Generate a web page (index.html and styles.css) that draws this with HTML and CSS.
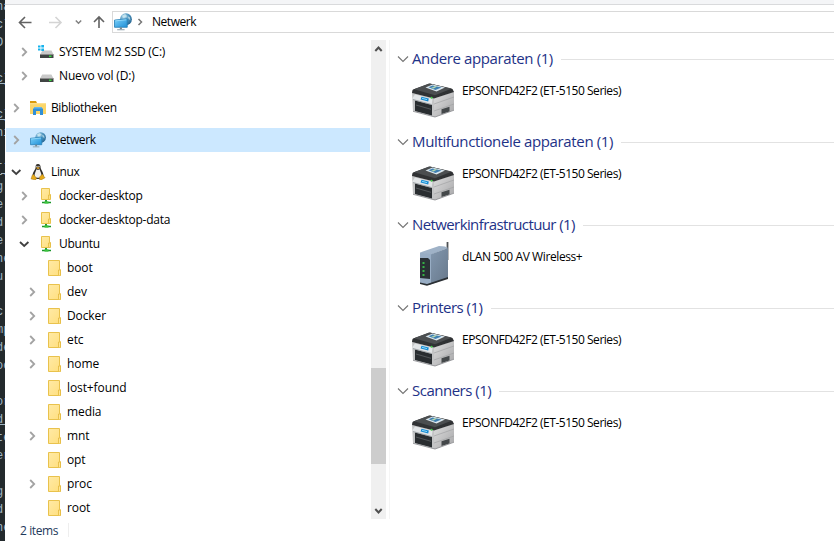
FILE: index.html
```html
<!DOCTYPE html>
<html lang="nl">
<head>
<meta charset="utf-8">
<title>Netwerk</title>
<link rel="stylesheet" href="styles.css">
</head>
<body>
<svg class="defs" width="0" height="0">
  <defs>
    <linearGradient id="gFolder" x1="0" y1="0" x2="1" y2="1"><stop offset="0" stop-color="#ffeaa6"/><stop offset="1" stop-color="#ffdf7e"/></linearGradient>
    <linearGradient id="gScreen" x1="0" y1="0" x2="1" y2="1"><stop offset="0" stop-color="#7bd0fa"/><stop offset="1" stop-color="#1f8fd6"/></linearGradient>
    <radialGradient id="gGlobe" cx=".35" cy=".3" r=".8"><stop offset="0" stop-color="#b4dcef"/><stop offset=".5" stop-color="#4c93bd"/><stop offset="1" stop-color="#205f8c"/></radialGradient>
    <linearGradient id="gSide" x1="0" y1="0" x2="1" y2="1"><stop offset="0" stop-color="#dedede"/><stop offset="1" stop-color="#a6a6a8"/></linearGradient>
    <linearGradient id="gRouter" x1="0" y1="0" x2="1" y2="1"><stop offset="0" stop-color="#8499b0"/><stop offset="1" stop-color="#67788b"/></linearGradient>
  </defs>
  <symbol id="right" viewBox="0 0 16 16"><path d="M6.200 4l4 4-4 4" fill="none" stroke="#a3a3a3" stroke-width="1.800"/></symbol>
  <symbol id="down" viewBox="0 0 16 16"><path d="M4 6l4.200 4L12.400 6" fill="none" stroke="#404040" stroke-width="1.800"/></symbol>
  <symbol id="folder" viewBox="0 0 16 16"><path d="M.5.5h11v9.200h1v5.800H.5z" fill="url(#gFolder)" stroke="#e9c24c"/><path d="M10.500 15V10h2v5.500" fill="#ffe694" stroke="#e3b93e" stroke-width=".8"/></symbol>
  <symbol id="share" viewBox="0 0 16 16"><path d="M3.500.5h8v6h1v5h-9z" fill="url(#gFolder)" stroke="#e9c24c"/><path d="M10.500 11V7h1.800v4" fill="#ffe694" stroke="#e3b93e" stroke-width=".8"/><path d="M8 12v2" stroke="#26983a" stroke-width="2"/><path d="M4 14.500h9" stroke="#199529" stroke-width="1.500"/><path d="M6.500 14.500h4" stroke="#3cc43f" stroke-width="2.300"/></symbol>
  <symbol id="drive" viewBox="0 0 16 16"><path d="M4.200 6.500h9.200L15.500 10.500H2z" fill="#c9c9c9"/><path d="M2 10.500h13.500v3.500H2z" fill="#404443"/><path d="M2 10.500h13.500" stroke="#8b8b8b"/><path d="M11 12.300h2.500" stroke="#35dc3d" stroke-width="1.500"/></symbol>
  <symbol id="sysdrive" viewBox="0 0 16 16"><path d="M4.500 6.500h9l2 4H2z" fill="#c9c9c9"/><path d="M2 10.500h13.500v3.500H2z" fill="#404443"/><path d="M2 10.500h13.500" stroke="#8b8b8b"/><path d="M11 12.300h2.500" stroke="#35dc3d" stroke-width="1.500"/><path d="M0 1.500h2.500v2H0zM3.300 1H6v2.500H3.300zM0 4.500h2.500v2H0zm3.300 0H6V7H3.300z" fill="#16b3ed"/></symbol>
  <symbol id="library" viewBox="0 0 16 16"><path d="M0 1h6l1 2v4H0z" fill="#d99a0b"/><path d="M0 3.200h16V14H0z" fill="#fbd568"/><path d="M0 3.200h16v1H0z" fill="#ffe394"/><path d="M3 15V9l2-2h6l2 2v6h-3v-4H6v4z" fill="#318fd6"/><path d="M3 8.500L5 7h6l2 1.500z" fill="#64b6ec"/></symbol>
  <symbol id="network" viewBox="0 0 17 17"><circle cx="11.300" cy="5.900" r="5.600" fill="url(#gGlobe)"/><path d="M7.500 2.500l3-1.500 2 2-2 1-2 .5zm5.500.5l2 1 .5 3-2-2z" fill="#d8eff5" opacity=".65"/><path d="M.5 6.700L12.500 5.500v8L.5 13.500z" fill="url(#gScreen)" stroke="#277fb5" stroke-width=".8"/><path d="M1.200 7.400l10.500-1" stroke="#a5e5ff" stroke-width=".7"/><path d="M6.500 13.500v1.900" stroke="#768993" stroke-width="2"/><path d="M3 15.800h7" stroke="#8fa2ad"/></symbol>
  <symbol id="tux" viewBox="0 0 16 16"><path d="M5.600 3.500C5.500 1 6.200 0 8 0s2.700 1.200 2.600 3.500c0 2 2.900 4.500 2.900 8.500 0 2-2 3-5.500 3s-5.500-1-5.500-3c0-4 3.100-6.400 3.100-8.500z" fill="#302d29"/><path d="M6.500 5.200L8 6l1.600-.8c.4 2 2.200 4 2 7-.1 2-6.900 2-7.100 0-.2-3 1.500-5 2-7z" fill="#f2f0ec"/><path d="M6 3.800l2-.8 2 1-2 1.300z" fill="#dfa225"/><circle cx="6.900" cy="2.500" r=".7" fill="#ddd"/><circle cx="9" cy="2.500" r=".7" fill="#ddd"/><path d="M3.400 10.200l3.200 4-1 1.700-4.600-1 1-3.200zM12.600 10.200l-2.900 2.500-.2 2.800 1.700.4 3.900-2.200-1.100-1.200z" fill="#e8aa18" stroke="#8b6410" stroke-width=".4"/></symbol>
  <symbol id="printer" viewBox="0 0 44 36">
    <path d="M1 11L24 16.500V35L2 29z" fill="#c3c4c5"/><path d="M23 16.500L43 9.500v18.500L24 35H23z" fill="url(#gSide)"/>
    <path d="M2 7.500Q1 8 1 11l22 5.500L43 10 41.500 7 19 1.500z" fill="#303234"/><path d="M3 7.300L18 1.500 41 6.500 24 13.200z" fill="#4b4e50"/>
    <path d="M14.500 5.500l7-3L34 5.600l-8.500 4z" fill="#dbe7ee"/><path d="M17.500 5.300l4-1.900 9 2-6 2.700z" fill="#3f7fb1"/><path d="M20 5.900l4.200-2 2 .5-3.600 2.200z" fill="#b5d8b1"/>
    <path d="M4 18.500l17 4.500v10.500L4 29z" fill="#292d30"/><path d="M5 23l15 4.300" stroke="#53575a"/>
    <path d="M4 12.500l17.500 4.200-.8 5.500-18-4.500L1 16.800z" fill="#e2e5e7"/><path d="M2 17.500l18.500 5" stroke="#94999d" stroke-width=".8"/>
    <path d="M10.500 14.700l7.300 1.800-.6 3-7.600-2z" fill="#188ad1"/><path d="M11 16.300l5 1.300" stroke="#8bdbff"/><circle cx="20.600" cy="15.700" r="1" fill="#41ce46"/>
    <path d="M23 22l20-7M23 29l20-7" stroke="#9c9d9f" stroke-width=".6"/><path d="M30.500 27.200l8-2.500v4.700l-8 2.600z" fill="#44484a"/>
    <path d="M2 29.300L24 35l19-6.800" fill="none" stroke="#85878a" stroke-width=".8"/>
  </symbol>
  <symbol id="router" viewBox="0 0 34 48">
    <path d="M28.500 4v18" stroke="#4e5255" stroke-width="1.800"/><path d="M1 14.500L20 8q7 0 9 2l-18 7z" fill="#9fb2c7"/>
    <path d="M10 17l19-7v30l-19 7z" fill="url(#gRouter)"/><path d="M1 14.500L12 16v30H1z" fill="#98adc4"/><path d="M1 20h8l2 2v19L1 40z" fill="#293034"/>
    <path d="M4.500 24v14" stroke="#35b044" stroke-width="2" stroke-dasharray="2 2"/><path d="M1 44.500l7 1.500 21-7v2L8 47.800 1 46z" fill="#2b3034"/>
  </symbol>
</svg>
<div class="screen">
<div class="editor" aria-hidden="true"><pre>na
cl
D:
 :
<u>c]</u>

<u>c]</u>
ni

<u>[]</u>
g.
e:
d
e:
ne
u:

c:
mp
de
oc
 :
or
<u>d:</u>
te
er
 :
g
d
ne</pre></div>
<div class="window">
  <div class="ribbon"></div>
  <header class="toolbar">
    <svg class="nav" viewBox="0 0 96 22" fill="none"><path d="M1.500 11.500h12M7 6l-5.500 5.500L7 17" stroke="#626262" stroke-width="1.600"/><path d="M31 11.500h12M37.500 6l5.500 5.500-5.500 5.500" stroke="#d4d4d4" stroke-width="1.600"/><path d="M57.800 9.500l2.700 2.700 2.700-2.700" stroke="#808080" stroke-width="1.500"/><path d="M81 17V6M76 11l5-5 5 5" stroke="#626262" stroke-width="1.600"/></svg>
    <div class="address"><svg class="net"><use href="#network"/></svg><svg class="crumb" viewBox="0 0 8 10"><path d="M2.500 2l3 3-3 3" fill="none" stroke="#777" stroke-width="1.500"/></svg><span>Netwerk</span></div>
  </header>
  <main class="body">
    <nav class="tree">
      <div class="row l1"><svg><use href="#right"/></svg><svg class="ic"><use href="#sysdrive"/></svg><span>SYSTEM M2 SSD (C:)</span></div>
      <div class="row l1"><svg><use href="#right"/></svg><svg class="ic"><use href="#drive"/></svg><span class="wide">Nuevo vol (D:)</span></div>
      <div class="row l0 gap"><svg><use href="#right"/></svg><svg class="ic"><use href="#library"/></svg><span>Bibliotheken</span></div>
      <div class="row l0 gap selected"><svg><use href="#right"/></svg><svg class="ic"><use href="#network"/></svg><span>Netwerk</span></div>
      <div class="row l0 gap"><svg><use href="#down"/></svg><svg class="ic"><use href="#tux"/></svg><span>Linux</span></div>
      <div class="row l1"><svg><use href="#right"/></svg><svg class="ic"><use href="#share"/></svg><span>docker-desktop</span></div>
      <div class="row l1"><svg><use href="#right"/></svg><svg class="ic"><use href="#share"/></svg><span>docker-desktop-data</span></div>
      <div class="row l1"><svg><use href="#down"/></svg><svg class="ic"><use href="#share"/></svg><span>Ubuntu</span></div>
      <div class="row l2"><svg></svg><svg class="ic"><use href="#folder"/></svg><span>boot</span></div>
      <div class="row l2"><svg><use href="#right"/></svg><svg class="ic"><use href="#folder"/></svg><span>dev</span></div>
      <div class="row l2"><svg><use href="#right"/></svg><svg class="ic"><use href="#folder"/></svg><span>Docker</span></div>
      <div class="row l2"><svg><use href="#right"/></svg><svg class="ic"><use href="#folder"/></svg><span>etc</span></div>
      <div class="row l2"><svg><use href="#right"/></svg><svg class="ic"><use href="#folder"/></svg><span>home</span></div>
      <div class="row l2"><svg></svg><svg class="ic"><use href="#folder"/></svg><span>lost+found</span></div>
      <div class="row l2"><svg></svg><svg class="ic"><use href="#folder"/></svg><span>media</span></div>
      <div class="row l2"><svg><use href="#right"/></svg><svg class="ic"><use href="#folder"/></svg><span>mnt</span></div>
      <div class="row l2"><svg></svg><svg class="ic"><use href="#folder"/></svg><span>opt</span></div>
      <div class="row l2"><svg><use href="#right"/></svg><svg class="ic"><use href="#folder"/></svg><span>proc</span></div>
      <div class="row l2"><svg></svg><svg class="ic"><use href="#folder"/></svg><span>root</span></div>
    </nav>
    <div class="scroll"><svg viewBox="0 0 15 18"><path d="M4.300 11l3.200-3.500 3.200 3.500" fill="none" stroke="#505050" stroke-width="2"/></svg><div class="thumb"></div><svg viewBox="0 0 15 18"><path d="M4.300 8l3.200 3.500L10.700 8" fill="none" stroke="#505050" stroke-width="2"/></svg></div>
    <section class="content">
      <div class="group"><h2><svg viewBox="0 0 12 8"><path d="M1 1.500l5 5 5-5" fill="none" stroke="#747474" stroke-width="1.100"/></svg><span>Andere apparaten (1)</span></h2><div class="item"><svg class="printer"><use href="#printer"/></svg><span>EPSONFD42F2 (ET-5150 Series)</span></div></div>
      <div class="group"><h2><svg viewBox="0 0 12 8"><path d="M1 1.500l5 5 5-5" fill="none" stroke="#747474" stroke-width="1.100"/></svg><span class="multi">Multifunctionele apparaten (1)</span></h2><div class="item"><svg class="printer"><use href="#printer"/></svg><span>EPSONFD42F2 (ET-5150 Series)</span></div></div>
      <div class="group"><h2><svg viewBox="0 0 12 8"><path d="M1 1.500l5 5 5-5" fill="none" stroke="#747474" stroke-width="1.100"/></svg><span class="infra">Netwerkinfrastructuur (1)</span></h2><div class="item"><svg class="router"><use href="#router"/></svg><span class="dlan">dLAN 500 AV Wireless+</span></div></div>
      <div class="group"><h2><svg viewBox="0 0 12 8"><path d="M1 1.500l5 5 5-5" fill="none" stroke="#747474" stroke-width="1.100"/></svg><span class="short">Printers (1)</span></h2><div class="item"><svg class="printer"><use href="#printer"/></svg><span>EPSONFD42F2 (ET-5150 Series)</span></div></div>
      <div class="group"><h2><svg viewBox="0 0 12 8"><path d="M1 1.500l5 5 5-5" fill="none" stroke="#747474" stroke-width="1.100"/></svg><span class="short">Scanners (1)</span></h2><div class="item"><svg class="printer"><use href="#printer"/></svg><span>EPSONFD42F2 (ET-5150 Series)</span></div></div>
    </section>
  </main>
  <footer class="status"><span>2 items</span></footer>
</div>
</div>
</body>
</html>
```
FILE: styles.css
```css
* { box-sizing: border-box; }
body { margin: 0; background: #fff; color: #000; font: 12px/16px "Open Sans", "Noto Sans", sans-serif; }
svg { display: block; flex: none; }
.defs { position: absolute; }
.screen { display: flex; width: 834px; height: 541px; overflow: hidden; }
.editor { width: 5px; overflow: hidden; background: #232a2d; flex: none; }
.editor pre { margin: -1px 0 0 -4px; color: #9fb4c1; font: 12px/17.97px "Liberation Mono", monospace; }
.window { flex: 1; min-width: 0; display: flex; flex-direction: column; }
.ribbon { height: 5px; background: #f4f5f7; border-bottom: 1px solid #d9dadc; }
.toolbar { height: 35px; padding: 6px 0 0 13px; display: flex; }
.nav { width: 96px; height: 22px; margin-right: -2px; }
.address { flex: 1; height: 22px; border: 1px solid #d9d9d9; border-right: 0; display: flex; align-items: center; letter-spacing: -.45px; }
.address .net { width: 18px; height: 18px; margin-left: 1px; }
.crumb { width: 8px; height: 10px; margin: 0 8px 0 4px; }
.body { height: 479px; display: flex; }
.tree { width: 366px; flex: none; }
.row { height: 24px; display: flex; align-items: center; white-space: nowrap; margin: 0 1px; }
.row svg { width: 16px; height: 16px; }
.row .ic { margin: 0 5px 0 6px; overflow: visible; }
.l0 { padding-left: 2px; }
.l1 { padding-left: 10px; }
.l2 { padding-left: 18px; }
.l2 .ic { margin: 0 3px 0 8px; }
.gap { margin-top: 8px; }
.selected { background: #cce8ff; }
.row span { letter-spacing: -.1px; }
.row.l0 span { letter-spacing: -.38px; }
.row.l1 span { letter-spacing: -.25px; }
.row.l1 .wide { letter-spacing: -.15px; }
.scroll { width: 15px; height: 479px; background: #f0f0f0; display: flex; flex-direction: column; flex: none; }
.scroll svg { width: 15px; height: 18px; }
.thumb { height: 96px; background: #cdcdcd; margin: 310px 0 37px; }
.content { flex: 1; margin-left: 3px; border-left: 1px solid #f5f5f5; padding: 8px 0 0 7px; }
.group { height: 83px; }
h2 { margin: 0; height: 22px; display: flex; align-items: center; color: #1e3287; font-size: 15px; line-height: 20px; font-weight: 400; letter-spacing: -.38px; white-space: nowrap; }
h2 span { margin-top: -2px; }
h2 svg { width: 12px; height: 8px; margin-right: 3px; }
h2::after { content: ""; flex: 1; height: 1px; margin-left: 8px; background: #e2e2e2; }
.multi { letter-spacing: -.36px; }
.infra { letter-spacing: -.6px; }
.short { letter-spacing: -.5px; }
.item { display: flex; }
.item svg { margin: 12px 7px 0 14px; }
.printer { width: 44px; height: 36px; }
.item .router { width: 34px; height: 48px; margin: 2px 9px 0 22px; }
.item span { margin-top: 13px; letter-spacing: -.47px; white-space: nowrap; }
.item .dlan { letter-spacing: -.4px; }
.status { height: 22px; padding: 4px 0 0 15px; color: #1e395b; letter-spacing: -.4px; display: flex; }
.status span { border-right: 1px solid #eee; width: 49px; height: 14px; white-space: nowrap; }
```
